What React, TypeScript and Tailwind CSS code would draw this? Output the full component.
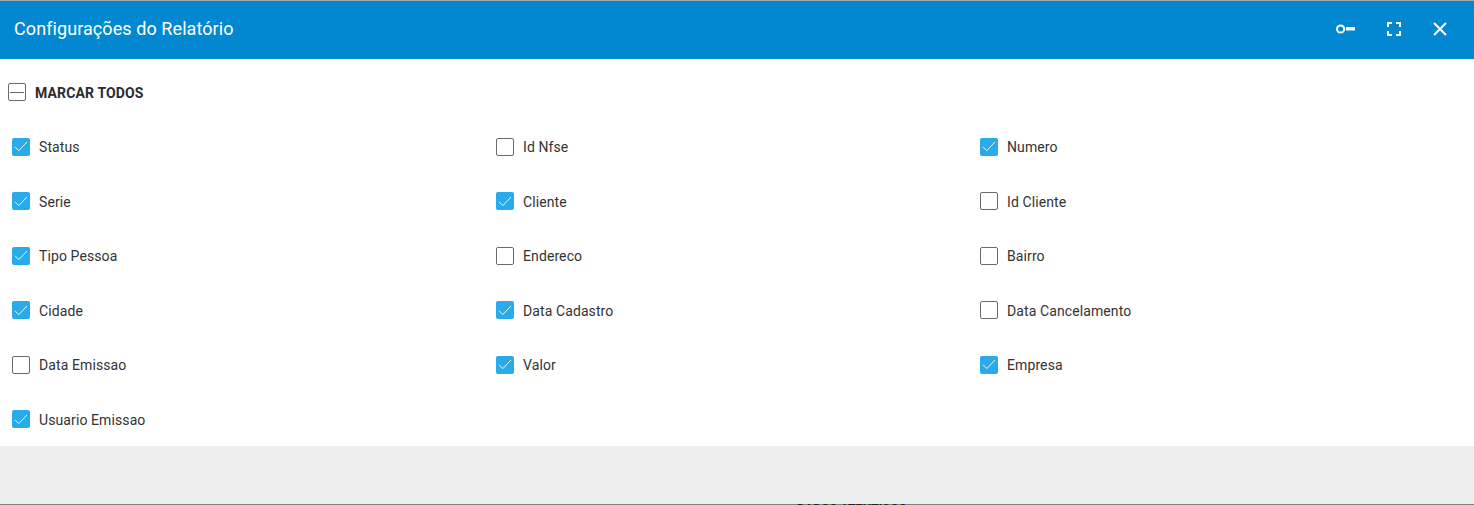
const rows: [string, boolean][] = [
  ["Status", true], ["Id Nfse", false], ["Numero", true],
  ["Serie", true], ["Cliente", true], ["Id Cliente", false],
  ["Tipo Pessoa", true], ["Endereco", false], ["Bairro", false],
  ["Cidade", true], ["Data Cadastro", true], ["Data Cancelamento", false],
  ["Data Emissao", false], ["Valor", true], ["Empresa", true],
  ["Usuario Emissao", true],
];

function Box({ checked }: { checked: boolean }) {
  return checked ? (
    <span className="w-[18px] h-[18px] rounded-[2px] bg-[#29abe9] flex items-center justify-center shrink-0">
      <svg width="14" height="11" viewBox="0 0 14 11" fill="none">
        <path d="M1 5.8 L4.8 9.6 L13 1" stroke="#ffffff" strokeWidth="0.9" />
      </svg>
    </span>
  ) : (
    <span className="w-[18px] h-[18px] rounded-[2px] border border-[#6b6b6b] bg-white shrink-0" />
  );
}

export default function App() {
  return (
    <div className="w-[1474px] h-[505px] overflow-hidden flex flex-col bg-[#ededed] font-['Roboto',sans-serif]">
      <div className="h-px bg-[#a8a8a8] shrink-0" />
      <header className="h-[58px] shrink-0 bg-[#0288d1] flex items-center justify-between pl-[14px] pr-[27px] pb-[3px] text-white">
        <h1 className="text-[18px] font-normal tracking-[0.08px]">Configurações do Relatório</h1>
        <div className="flex items-center gap-[32px] pt-[1px]">
          <svg width="19" height="10" viewBox="0 0 19 10" fill="none">
            <circle cx="4.6" cy="5" r="3.6" stroke="#fff" strokeWidth="2" />
            <rect x="10" y="3" width="9" height="3.5" rx="0.5" fill="#fff" />
          </svg>
          <svg width="14" height="14" viewBox="0 0 14 14" fill="none" stroke="#fff" strokeWidth="2">
            <path d="M1 5V1H5M9 1H13V5M13 9V13H9M5 13H1V9" />
          </svg>
          <svg width="14" height="14" viewBox="0 0 14 14" fill="none" stroke="#fff" strokeWidth="2">
            <path d="M1 1L13 13M13 1L1 13" />
          </svg>
        </div>
      </header>
      <main className="bg-white h-[387px] shrink-0 flex flex-col">
        <div className="flex items-start gap-[9px] pl-2 pt-[24px] h-[60px] shrink-0">
          <span className="w-[18px] h-[18px] rounded-[2px] border border-[#6b6b6b] flex items-center justify-center">
            <span className="w-[14px] h-px bg-[#6b6b6b]" />
          </span>
          <span className="text-[14px] font-bold text-[#2b2b2b] tracking-[0.14px]">MARCAR TODOS</span>
        </div>
        <div className="grid grid-cols-3 w-[1452px] ml-3 pt-[0.5px] auto-rows-[54.5px]">
          {rows.map(([label, checked]) => (
            <label key={label} className="flex items-center gap-[9px] h-[54.5px]">
              <Box checked={checked} />
              <span className="text-[14px] text-[#333333] tracking-[0.1px] pt-[2px]">{label}</span>
            </label>
          ))}
        </div>
      </main>
      <div className="flex-1" />
      <div className="h-px bg-[#808080] shrink-0 relative">
        <span className="absolute left-[797px] top-[-4px] z-10 text-[12px] font-bold text-[#222222] whitespace-nowrap tracking-[0.2px]">DADOS ATENTICOS</span>
      </div>
    </div>
  );
}
